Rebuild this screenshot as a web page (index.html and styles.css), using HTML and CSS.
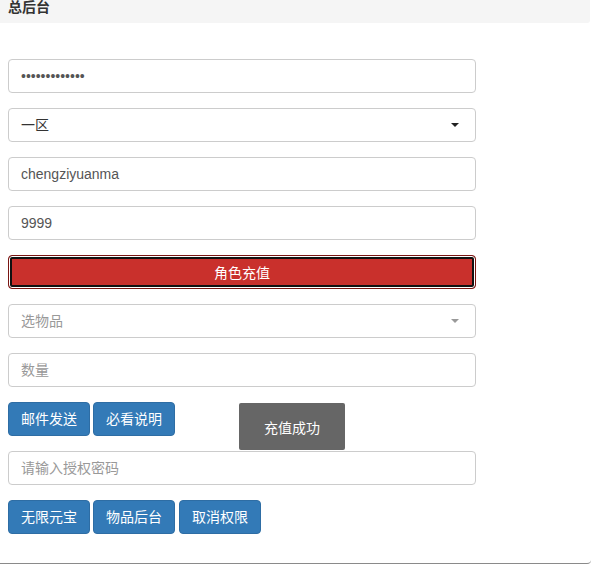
FILE: index.html
```html
<!DOCTYPE html>
<html lang="zh">
<head>
<meta charset="utf-8">
<title>总后台</title>
<link rel="stylesheet" href="styles.css">
</head>
<body>
<div class="panel">
  <div class="panel-heading">总后台</div>
  <div class="panel-body">
    <div class="form-group"><input class="form-control" type="password" value="1234567890123"></div>
    <div class="form-group">
      <div class="select">
        <span>一区</span>
        <span class="caret"></span>
      </div>
    </div>
    <div class="form-group"><input class="form-control" type="text" value="chengziyuanma"></div>
    <div class="form-group"><input class="form-control" type="text" value="9999"></div>
    <div class="form-group"><button class="btn-danger">角色充值</button></div>
    <div class="form-group">
      <div class="select select2">
        <span class="ph">选物品</span>
        <span class="caret caret-gray"></span>
      </div>
    </div>
    <div class="form-group"><input class="form-control" type="text" placeholder="数量"></div>
    <div class="form-group btn-row">
      <button class="btn">邮件发送</button><button class="btn">必看说明</button>
    </div>
    <div class="form-group"><input class="form-control" type="text" placeholder="请输入授权密码"></div>
    <div class="form-group btn-row">
      <button class="btn">无限元宝</button><button class="btn">物品后台</button><button class="btn gap">取消权限</button>
    </div>
  </div>
  <div class="toast">充值成功</div>
</div>
</body>
</html>
```
FILE: styles.css
```css
* { box-sizing: border-box; }
html, body { margin: 0; padding: 0; background: #fff; }
body {
  font-family: "Liberation Sans", "Noto Sans CJK SC", sans-serif;
  font-size: 14px;
  color: #333;
  width: 591px;
  height: 565px;
  overflow: hidden;
}
.panel {
  position: relative;
  width: 591px;
  height: 564px;
  border-bottom: 1px solid #8a8a8a;
  border-bottom-right-radius: 4px;
}
.panel-heading {
  height: 23px;
  background: #f5f5f5;
  font-weight: bold;
  font-size: 14px;
  line-height: 14px;
  padding-left: 8px;
  color: #333;
  border-bottom-right-radius: 3px;
  margin-right: 1px;
}
.panel-body {
  padding: 36px 0 0 8px;
}
.form-group {
  width: 468px;
  margin-bottom: 15px;
}
.form-control, .select {
  display: block;
  width: 468px;
  height: 34px;
  padding: 6px 12px;
  font-family: "Liberation Sans", "Noto Sans CJK SC", sans-serif;
  font-size: 14px;
  line-height: 20px;
  color: #555;
  background: #fff;
  border: 1px solid #ccc;
  border-radius: 4px;
  outline: none;
}
.form-control::placeholder { color: #999; }
.select {
  display: flex;
  align-items: center;
  justify-content: space-between;
  color: #333;
}
.select .ph { color: #999; }
.caret {
  width: 0;
  height: 0;
  border-left: 4px solid transparent;
  border-right: 4px solid transparent;
  border-top: 4px solid #222;
  margin-right: 4px;
}
.caret-gray { border-top-color: #999; }
.btn-danger {
  display: block;
  width: 468px;
  height: 34px;
  font-family: "Liberation Sans", "Noto Sans CJK SC", sans-serif;
  font-size: 14px;
  color: #fff;
  background: #c9302c;
  border: 1px solid #7a1613;
  border-radius: 4px;
  box-shadow: inset 0 0 0 1px #fff, inset 0 0 0 3px #111;
  padding: 0;
}
.btn-row { display: flex; gap: 3px; }
.btn {
  height: 34px;
  padding: 6px 12px;
  font-family: "Liberation Sans", "Noto Sans CJK SC", sans-serif;
  font-size: 14px;
  line-height: 20px;
  color: #fff;
  background: #337ab7;
  border: 1px solid #2e6da4;
  border-radius: 4px;
}
.btn.gap { margin-left: 1px; }
.toast {
  position: absolute;
  left: 239px;
  top: 403px;
  width: 106px;
  height: 47px;
  background: #666;
  color: #fff;
  font-size: 14px;
  border-radius: 2px;
  display: flex;
  align-items: center;
  justify-content: center;
}
```
